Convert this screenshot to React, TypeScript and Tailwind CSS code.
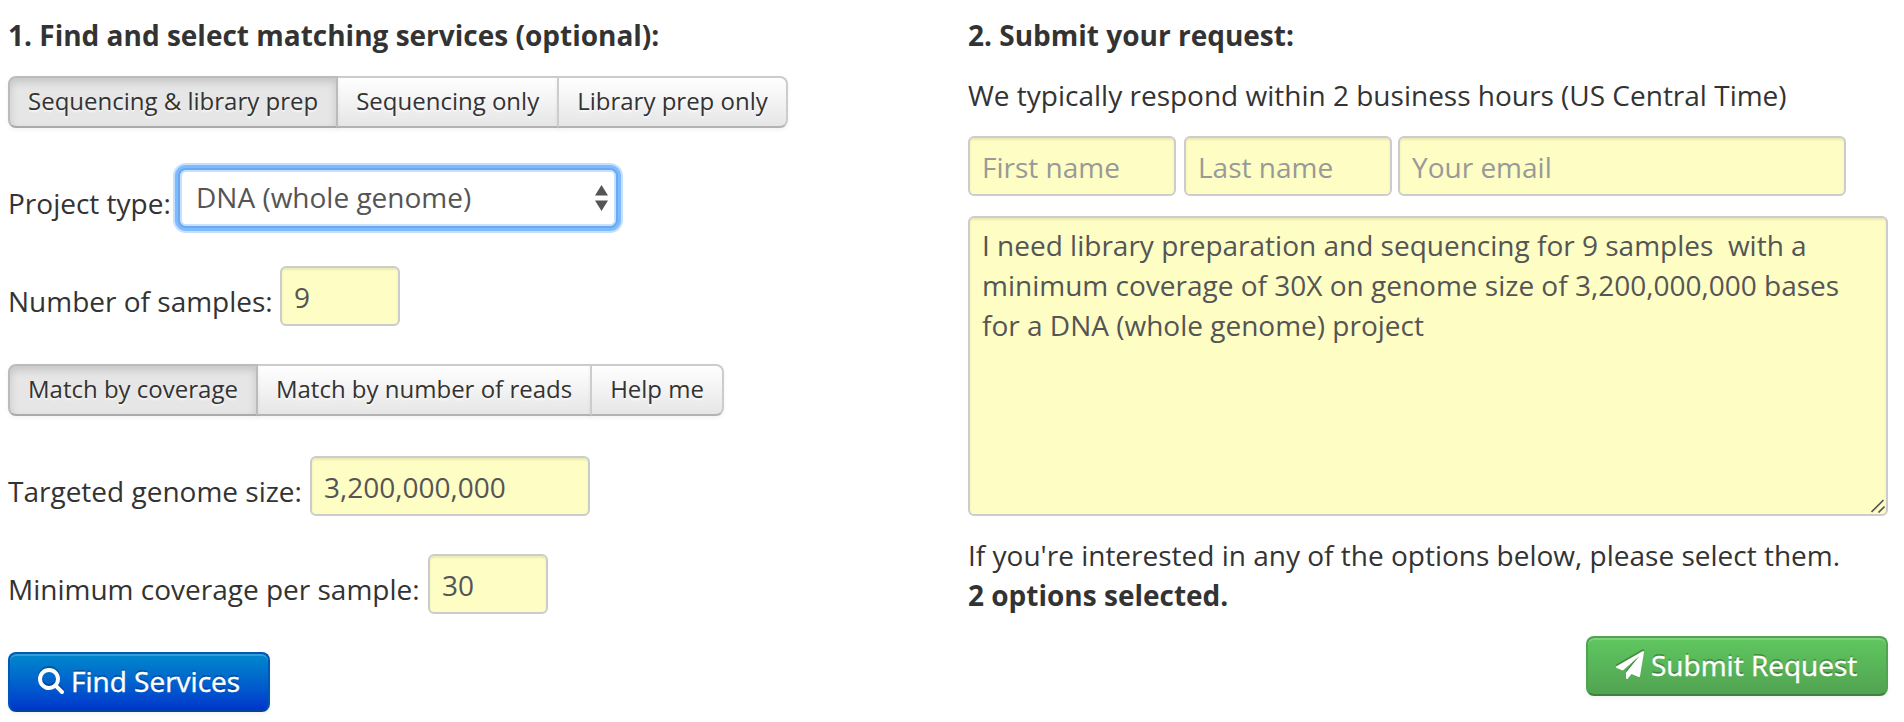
import { useState } from 'react'

const prepOptions = ['Sequencing & library prep', 'Sequencing only', 'Library prep only']
const matchOptions = ['Match by coverage', 'Match by number of reads', 'Help me']

const controlClass =
  'block rounded-[6px] border-2 border-[#cccccc] bg-[#fdfdc4] px-3 text-[28px] leading-10 text-[#555555] shadow-[inset_0_2px_2px_rgba(0,0,0,0.075)] outline-none placeholder:text-[#999999]'
const inputClass = `${controlClass} h-[60px] pt-[9px] pb-[7px]`

function SearchIcon() {
  return (
    <svg
      viewBox="64 128 1664 1664"
      className="mr-[7px] size-[26px] fill-current drop-shadow-[0_-2px_0_rgba(0,0,0,0.25)]"
    >
      <path d="M1216 832q0-185-131.500-316.500t-316.500-131.500-316.500 131.500-131.500 316.500 131.500 316.500 316.500 131.500 316.500-131.500 131.500-316.500zm512 832q0 52-38 90t-90 38q-54 0-90-38l-343-342q-179 124-399 124-143 0-273.500-55.500t-225-150-150-225-55.500-273.500 55.500-273.500 150-225 225-150 273.500-55.500 273.500 55.500 225 150 150 225 55.500 273.500q0 220-124 399l343 343q37 37 37 90z" />
    </svg>
  )
}

function PlaneIcon() {
  return (
    <svg
      viewBox="0 0 1792 1792"
      className="mr-[7px] size-7 fill-current drop-shadow-[0_-2px_0_rgba(0,0,0,0.25)]"
    >
      <path d="M1764 11q33 24 27 64l-256 1536q-5 29-32 45-14 8-31 8-11 0-24-5l-453-185-242 295q-18 23-49 23-13 0-22-4-19-7-30.500-23.500t-11.500-36.500v-349l864-1059-1069 925-395-162q-37-14-40-55-2-40 32-59l1664-960q15-9 32-9 20 0 36 11z" />
    </svg>
  )
}

function ButtonGroup({ options }: { options: string[] }) {
  const [active, setActive] = useState(0)

  return (
    <div className="flex h-[52px]">
      {options.map((label, i) => (
        <button
          key={label}
          type="button"
          onClick={() => setActive(i)}
          className={
            'relative -ml-0.5 h-[52px] border-2 px-[18px] pb-[3px] text-[24px] leading-10 whitespace-nowrap text-[#333333] [text-shadow:0_2px_2px_rgba(255,255,255,0.75)] first:ml-0 first:rounded-l-[8px] last:rounded-r-[8px] ' +
            (i === active
              ? 'z-10 border-[#bbbbbb] border-b-[#aaaaaa] bg-[#e6e6e6] shadow-[inset_0_4px_8px_rgba(0,0,0,0.15),0_2px_4px_rgba(0,0,0,0.05)]'
              : 'border-[#cccccc] border-b-[#b3b3b3] bg-linear-to-b from-white to-[#e6e6e6] shadow-[inset_0_2px_0_rgba(255,255,255,0.2),0_2px_4px_rgba(0,0,0,0.05)]')
          }
        >
          {label}
        </button>
      ))}
    </div>
  )
}

export default function App() {
  const [samples, setSamples] = useState('9')
  const [genomeSize, setGenomeSize] = useState('3,200,000,000')
  const [coverage, setCoverage] = useState('30')
  const [message, setMessage] = useState(
    'I need library preparation and sequencing for 9 samples  with a minimum coverage of 30X on genome size of 3,200,000,000 bases for a DNA (whole genome) project',
  )

  return (
    <div className="flex h-[722px] w-[1904px] overflow-hidden bg-white pl-2 font-['Open_Sans',sans-serif] text-[28px] leading-10 text-[#333333]">
      <section className="w-[960px] pt-[15px]">
        <h2 className="mb-[21px] font-bold">1. Find and select matching services (optional):</h2>
        <ButtonGroup options={prepOptions} />

        <div className="mt-10 flex h-[60px]">
          <label htmlFor="project" className="w-[170px] pt-[15px] whitespace-nowrap">
            Project type:
          </label>
          <div className="relative">
            <select
              id="project"
              className="block h-[60px] w-[440px] appearance-none rounded-[8px] border-2 border-[#6aa9ee] bg-white pr-8 pb-0.5 pl-4 text-[28px] text-[#555555] shadow-[0_0_0_3px_#7ebaff,0_0_0_5px_#c5e1ff,inset_0_0_0_2px_#c5e1ff] outline-none"
            >
              <option>DNA (whole genome)</option>
            </select>
            <svg
              viewBox="0 0 13 26"
              className="pointer-events-none absolute top-[17px] right-[10px] h-[26px] w-[13px] fill-[#555555]"
            >
              <path d="M6.500 0l6.500 10.500H0zM6.500 26l6.500-10.500H0z" />
            </svg>
          </div>
        </div>

        <div className="mt-[38px] flex h-[60px]">
          <label htmlFor="samples" className="w-[272px] pt-[15px] whitespace-nowrap">
            Number of samples:
          </label>
          <input
            id="samples"
            value={samples}
            onChange={(e) => setSamples(e.target.value)}
            className={`${inputClass} w-[120px]`}
          />
        </div>

        <div className="mt-[38px]">
          <ButtonGroup options={matchOptions} />
        </div>

        <div className="mt-10 flex h-[60px]">
          <label htmlFor="genome" className="w-[302px] pt-[15px] whitespace-nowrap">
            Targeted genome size:
          </label>
          <input
            id="genome"
            value={genomeSize}
            onChange={(e) => setGenomeSize(e.target.value)}
            className={`${inputClass} w-[280px]`}
          />
        </div>

        <div className="mt-[38px] flex h-[60px]">
          <label htmlFor="coverage" className="w-[420px] pt-[15px] whitespace-nowrap">
            Minimum coverage per sample:
          </label>
          <input
            id="coverage"
            value={coverage}
            onChange={(e) => setCoverage(e.target.value)}
            className={`${inputClass} w-[120px]`}
          />
        </div>

        <button
          type="button"
          className="mt-[38px] flex h-[60px] w-[262px] items-center rounded-[8px] border-2 border-[#0058b5] border-b-[#00469c] bg-linear-to-b from-[#0088cc] to-[#0033cc] pb-0.5 pl-7 whitespace-nowrap text-white shadow-[inset_0_2px_0_rgba(255,255,255,0.2),0_2px_4px_rgba(0,0,0,0.05)] [-webkit-text-stroke:0.4px_white] [text-shadow:0_-2px_0_rgba(0,0,0,0.25)]"
        >
          <SearchIcon />
          Find Services
        </button>
      </section>

      <section className="w-[920px] pt-[15px]">
        <h2 className="mb-5 font-bold">2. Submit your request:</h2>
        <p>We typically respond within 2 business hours (US Central Time)</p>

        <div className="mt-[21px] flex">
          <input placeholder="First name" className={`${inputClass} mr-2 w-[208px]`} />
          <input placeholder="Last name" className={`${inputClass} mr-1.5 w-[208px]`} />
          <input placeholder="Your email" className={`${inputClass} w-[448px]`} />
        </div>

        <div className="relative mt-5">
          <textarea
            value={message}
            onChange={(e) => setMessage(e.target.value)}
            className={`${controlClass} h-[300px] w-[920px] resize-none pt-[7px]`}
          />
          <svg
            viewBox="0 0 14 14"
            className="pointer-events-none absolute right-[3px] bottom-[3px] size-3.5 stroke-[#555555] stroke-[1.7]"
          >
            <path d="M0.5 13L12.5 1M7.5 13.5L13.5 7.5" />
          </svg>
        </div>

        <p className="mt-[19px] whitespace-nowrap">
          If you're interested in any of the options below, please select them.
        </p>
        <p className="font-bold">2 options selected.</p>

        <div className="mt-[21px] flex justify-end">
          <button
            type="button"
            className="flex h-[60px] w-[302px] items-center rounded-[8px] border-2 border-[#51a351] border-b-[#408140] bg-linear-to-b from-[#5fc75f] to-[#51a351] pb-0.5 pl-7 whitespace-nowrap text-white shadow-[inset_0_2px_0_rgba(255,255,255,0.2),0_2px_4px_rgba(0,0,0,0.05)] [-webkit-text-stroke:0.4px_white] [text-shadow:0_-2px_0_rgba(0,0,0,0.25)]"
          >
            <PlaneIcon />
            Submit Request
          </button>
        </div>
      </section>
    </div>
  )
}
